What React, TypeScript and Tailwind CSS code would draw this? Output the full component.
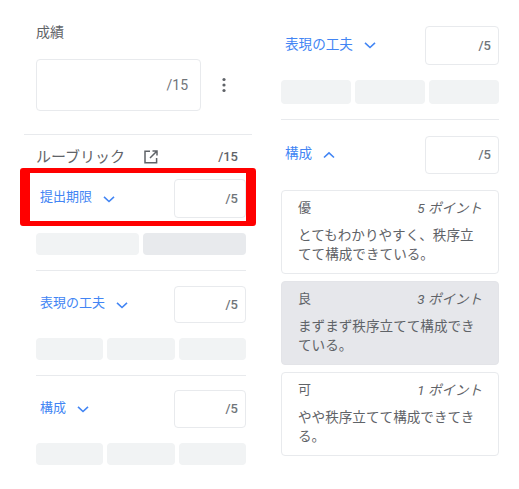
import React from "react";

const font = "[font-family:Roboto,'Noto_Sans_CJK_JP',sans-serif]";

const Chevron = ({ up = false }: { up?: boolean }) => (
  <svg width="14" height="14" viewBox="0 0 14 14" fill="none" stroke="#4285f4" strokeWidth="1.6" className="ml-[10px] mt-[3px]">
    <path d={up ? "M2 9.5 7 4.8l5 4.7" : "M2 4.8 7 9.5l5-4.7"} />
  </svg>
);

const Criterion = ({
  title,
  up = false,
  box = "h-[38px] w-[72px]",
  titleSize = "text-[13px]",
}: {
  title: string;
  up?: boolean;
  box?: string;
  titleSize?: string;
}) => (
  <div className="flex items-center justify-between">
    <div className={`flex items-center pb-[3px] pl-1 text-[#4285f4] ${titleSize}`}>
      <span>{title}</span>
      <Chevron up={up} />
    </div>
    <div className={`flex ${box} items-center justify-end rounded border border-[#e8eaed] pr-[7px] text-[13px] font-medium text-[#70757a]`}>
      /5
    </div>
  </div>
);

const Bars = ({ shades, height = "h-[22px]" }: { shades: string[]; height?: string }) => (
  <div className="mt-[15px] flex gap-1">
    {shades.map((s, i) => (
      <div key={i} className={`${height} flex-1 rounded-sm ${s}`} />
    ))}
  </div>
);

const Level = ({
  name,
  points,
  text,
  selected = false,
}: {
  name: string;
  points: string;
  text: string;
  selected?: boolean;
}) => (
  <div
    className={`h-[84px] rounded border px-4 pt-[7px] text-[#5f6368] ${
      selected ? "border-[#e3e4e8] bg-[#e6e7eb]" : "border-[#e8eaed] bg-white"
    }`}
  >
    <div className="flex items-center justify-between text-[13px] leading-[20px]">
      <span>{name}</span>
      <span className="text-[13.5px] italic">{points}</span>
    </div>
    <p className="mt-[8px] text-[13.6px] leading-[19px]">{text}</p>
  </div>
);

const light = "bg-[#f1f3f4]";

export default function App() {
  return (
    <div className={`relative flex h-[489px] w-[519px] overflow-hidden bg-white ${font}`}>
      {/* left column */}
      <div className="ml-6 w-[228px]">
        <div className="px-3">
          <div className="pt-[22px] text-[14px] leading-[20px] text-[#5f6368]">成績</div>
          <div className="mt-[17px] flex items-center">
            <div className="flex h-[52px] w-[165px] items-center justify-end rounded border border-[#e8eaed] pr-3 text-[14px] text-[#70757a]">
              /15
            </div>
            <svg width="4" height="16" viewBox="0 0 4 16" className="ml-[21px]" fill="#5f6368">
              <circle cx="2" cy="2.5" r="1.6" />
              <circle cx="2" cy="8" r="1.6" />
              <circle cx="2" cy="13.5" r="1.6" />
            </svg>
          </div>
        </div>
        <div className="mt-[23px] border-t border-[#e8eaed]" />
        <div className="flex items-center justify-between pr-[14px] pl-3 pt-[11px]">
          <div className="flex items-center text-[15px] leading-[22px] text-[#5f6368]">
            <span>ルーブリック</span>
            <svg width="16" height="16" viewBox="0 0 16 16" fill="none" stroke="#5f6368" strokeWidth="1.5" className="ml-[18px]">
              <path d="M7 2.2H2v11.6h11.6V9M9.5 2H14v4.5M14 2 7 9" />
            </svg>
          </div>
          <span className="text-[13px] font-medium text-[#5f6368]">/15</span>
        </div>
        <div className="ml-3 mr-[6px]">
          <div className="mt-[11px]">
            <Criterion title="提出期限" box="h-[39px] w-[72px]" />
          </div>
          <Bars shades={[light, "bg-[#e8eaed]"]} />
          <div className="mt-[15px] border-t border-[#e8eaed]" />
          <div className="mt-[15px]">
            <Criterion title="表現の工夫" box="h-[37px] w-[72px]" />
          </div>
          <Bars shades={[light, light, light]} />
          <div className="mt-[15px] border-t border-[#e8eaed]" />
          <div className="mt-[14px]">
            <Criterion title="構成" box="h-[38px] w-[72px]" />
          </div>
          <Bars shades={[light, light, light]} />
        </div>
      </div>

      {/* right column */}
      <div className="ml-[29px] w-[218px] pt-[26px]">
        <Criterion title="表現の工夫" box="h-[39px] w-[74px]" titleSize="text-[13.6px]" />
        <Bars shades={[light, light, light]} height="h-[24px]" />
        <div className="mt-[15px] border-t border-[#e8eaed]" />
        <div className="mt-[16px]">
          <Criterion title="構成" up box="h-[38px] w-[74px]" titleSize="text-[13.6px]" />
        </div>
        <div className="mt-[16px] flex flex-col gap-[7px]">
          <Level name="優" points="5 ポイント" text="とてもわかりやすく、秩序立てて構成できている。" />
          <Level name="良" points="3 ポイント" text="まずまず秩序立てて構成できている。" selected />
          <Level name="可" points="1 ポイント" text="やや秩序立てて構成できてきる。" />
        </div>
      </div>

      {/* red highlight over the first criterion */}
      <div className="pointer-events-none absolute top-[168px] left-5 h-[58px] w-[236px] rounded-[3px] border-x-[10px] border-y-[5px] border-[#ff0000]" />
    </div>
  );
}
